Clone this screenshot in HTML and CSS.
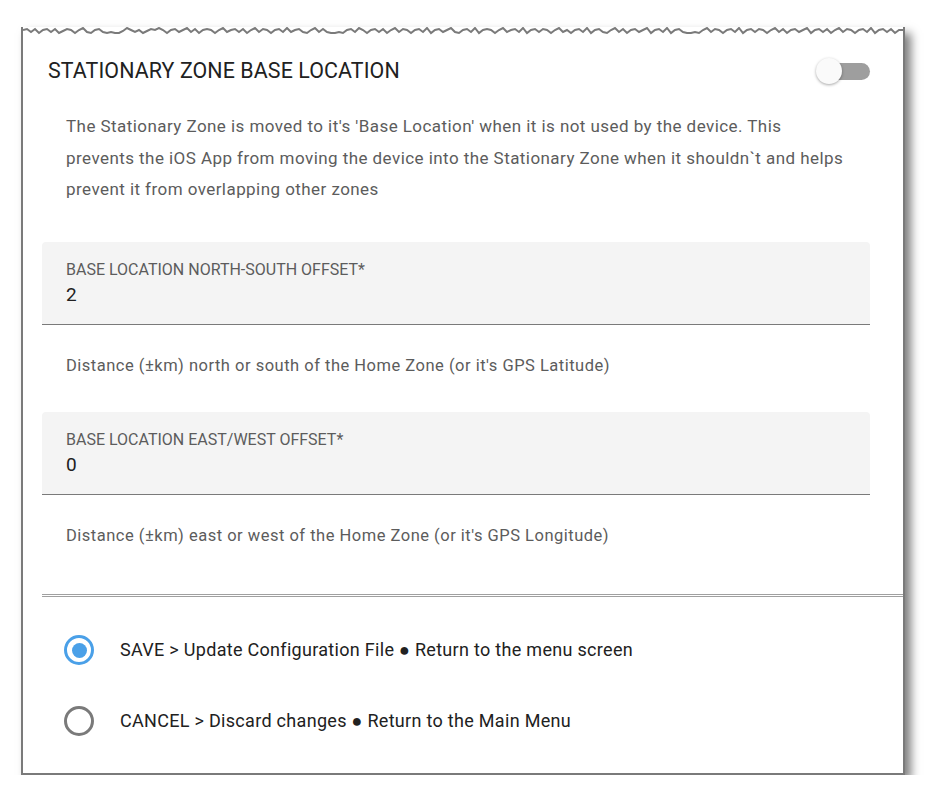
FILE: index.html
```html
<!DOCTYPE html>
<html>
<head>
<meta charset="utf-8">
<link rel="stylesheet" href="styles.css">
</head>
<body>
<div class="frame">
  <svg class="torn" viewBox="0 0 880 9" preserveAspectRatio="none">
    <path d="M0 3 L4 2 L8 5 L12 2 L16 6 L20 3 L24 2 L28 5 L32 2 L36 6 L40 4 L44 2 L48 3 L52 6 L56 3 L60 1 L64 5 L68 6 L72 3 L76 2 L80 5 L84 6 L88 5 L92 6 L96 6 L100 4 L104 1 L108 3 L112 5 L116 3 L120 6 L124 4 L128 2 L132 3 L136 1 L140 3 L144 6 L148 3 L152 2 L156 5 L160 3 L164 1 L168 5 L172 2 L176 6 L180 3 L184 2 L188 3 L192 6 L196 3 L200 1 L204 5 L208 3 L212 2 L216 5 L220 2 L224 6 L228 3 L232 1 L236 5 L240 2 L244 3 L248 6 L252 3 L256 2 L260 5 L264 1 L268 5 L272 3 L276 2 L280 5 L284 6 L288 3 L292 1 L296 5 L300 2 L304 5 L308 6 L312 6 L316 5 L320 6 L324 3 L328 2 L332 5 L336 1 L340 3 L344 6 L348 3 L352 2 L356 5 L360 2 L364 6 L368 3 L372 1 L376 5 L380 2 L384 3 L388 6 L392 3 L396 2 L400 5 L404 1 L408 6 L412 3 L416 2 L420 5 L424 3 L428 1 L432 5 L436 6 L440 3 L444 2 L448 5 L452 1 L456 6 L460 3 L464 2 L468 3 L472 6 L476 3 L480 1 L484 5 L488 3 L492 2 L496 5 L500 1 L504 6 L508 3 L512 2 L516 5 L520 2 L524 3 L528 6 L532 3 L536 1 L540 5 L544 3 L548 6 L552 3 L556 2 L560 5 L564 1 L568 6 L572 3 L576 2 L580 5 L584 6 L588 3 L592 1 L596 5 L600 2 L604 6 L608 3 L612 2 L616 5 L620 3 L624 1 L628 6 L632 3 L636 2 L640 5 L644 1 L648 6 L652 3 L656 2 L660 5 L664 6 L668 6 L672 5 L676 6 L680 3 L684 1 L688 5 L692 2 L696 3 L700 6 L704 3 L708 2 L712 5 L716 1 L720 6 L724 3 L728 2 L732 5 L736 2 L740 3 L744 6 L748 3 L752 1 L756 5 L760 2 L764 6 L768 3 L772 2 L776 5 L780 3 L784 1 L788 6 L792 3 L796 2 L800 5 L804 2 L808 6 L812 3 L816 1 L820 5 L824 2 L828 3 L832 6 L836 3 L840 2 L844 5 L848 1 L852 6 L856 3 L860 2 L864 5 L868 2 L872 6 L876 3 L880 3" />
  </svg>

  <div class="header">
    <span class="title">STATIONARY ZONE BASE LOCATION</span>
    <span class="switch"><span class="track"></span><span class="thumb"></span></span>
  </div>

  <p class="desc">The Stationary Zone is moved to it's 'Base Location' when it is not used by the device. This<br>prevents the iOS App from moving the device into the Stationary Zone when it shouldn`t and helps<br>prevent it from overlapping other zones</p>

  <div class="field first">
    <div class="label">BASE LOCATION NORTH-SOUTH OFFSET*</div>
    <div class="value">2</div>
  </div>
  <p class="helper">Distance (±km) north or south of the Home Zone (or it's GPS Latitude)</p>

  <div class="field">
    <div class="label">BASE LOCATION EAST/WEST OFFSET*</div>
    <div class="value">0</div>
  </div>
  <p class="helper">Distance (±km) east or west of the Home Zone (or it's GPS Longitude)</p>

  <div class="divider"></div>

  <div class="options">
    <div class="option">
      <span class="radio checked"></span>
      <span class="opt-text">SAVE &gt; Update Configuration File ● Return to the menu screen</span>
    </div>
    <div class="option">
      <span class="radio"></span>
      <span class="opt-text">CANCEL &gt; Discard changes ● Return to the Main Menu</span>
    </div>
  </div>
</div>
</body>
</html>
```

FILE: styles.css
```css
html, body {
  margin: 0;
  padding: 0;
  background: #fff;
}

body {
  font-family: Roboto, "Liberation Sans", sans-serif;
}

.frame {
  box-sizing: border-box;
  width: 884px;
  height: 748px;
  margin: 27px 0 0 21px;
  border: 2px solid #7a7a7a;
  border-top: 0;
  background: #fff;
  box-shadow: 6px 6px 9px rgba(0, 0, 0, 0.5);
  display: flex;
  flex-direction: column;
}

.torn {
  display: block;
  width: 100%;
  height: 9px;
}

.torn path {
  fill: none;
  stroke: #7a7a7a;
  stroke-width: 2;
  vector-effect: non-scaling-stroke;
}

.header {
  height: 69px;
  display: flex;
  align-items: center;
  justify-content: space-between;
  padding: 0 33px 0 25px;
}

.title {
  font-size: 21.4px;
  color: #212121;
  letter-spacing: 0.1px;
}

.switch {
  position: relative;
  width: 54px;
  height: 26px;
}

.track {
  position: absolute;
  right: 0;
  top: 5px;
  width: 40px;
  height: 17px;
  border-radius: 9px;
  background: #9e9e9e;
}

.thumb {
  position: absolute;
  left: 0;
  top: 0;
  width: 26px;
  height: 26px;
  border-radius: 50%;
  background: #fafafa;
  box-shadow: 0 1px 3px rgba(0, 0, 0, 0.35);
}

.desc {
  margin: 6px 20px 0 43px;
  font-size: 17px;
  line-height: 31.5px;
  color: #5c5c5c;
  letter-spacing: 0.44px;
  white-space: nowrap;
}

.field {
  margin: 0 33px 0 19px;
  background: #f4f4f4;
  border-radius: 4px 4px 0 0;
  border-bottom: 1px solid #7a7a7a;
  padding: 18px 24px 0;
  height: 64px;
}

.field.first {
  margin-top: 36px;
}

.label {
  font-size: 16px;
  line-height: 20px;
  color: #5c5c5c;
}

.value {
  margin-top: 4px;
  font-size: 19px;
  line-height: 22px;
  color: #212121;
}

.helper {
  margin: 0 0 0 43px;
  padding: 25px 0 30px;
  font-size: 16.5px;
  line-height: 32px;
  color: #5c5c5c;
  letter-spacing: 0.5px;
}

.divider {
  margin: 12px 0 0 19px;
  border-top: 3px double #a0a0a0;
}

.options {
  padding-top: 18px;
}

.option {
  height: 71px;
  display: flex;
  align-items: center;
  padding-left: 41px;
}

.radio {
  box-sizing: border-box;
  width: 30px;
  height: 30px;
  border-radius: 50%;
  border: 3px solid #7a7a7a;
  margin-right: 26px;
  display: flex;
  align-items: center;
  justify-content: center;
}

.radio.checked {
  border-color: #4aa0e8;
}

.radio.checked::after {
  content: "";
  width: 15px;
  height: 15px;
  border-radius: 50%;
  background: #4aa0e8;
}

.opt-text {
  font-size: 18px;
  color: #212121;
  letter-spacing: 0.3px;
}
```
